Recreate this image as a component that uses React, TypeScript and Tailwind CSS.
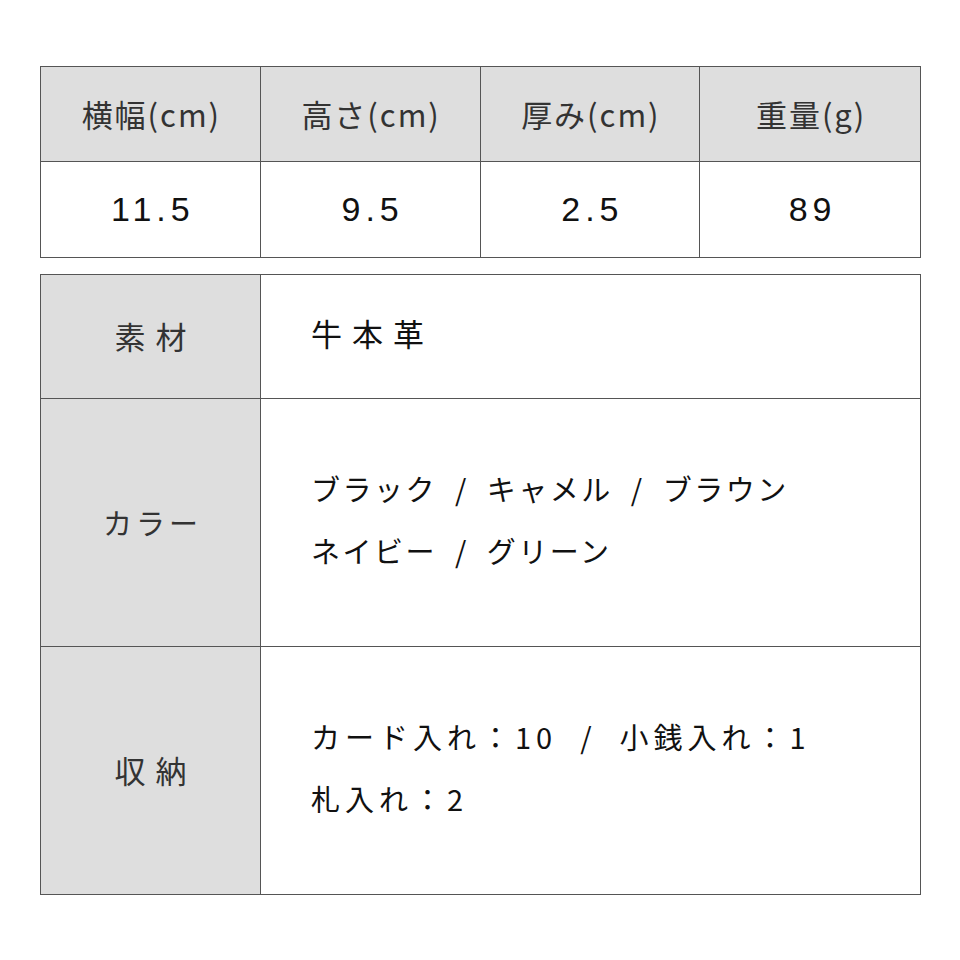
const font = {
  fontFamily: '"Noto Sans CJK JP", "Noto Sans", sans-serif',
};

const SPECS = [
  { label: "横幅(cm)", value: "11.5" },
  { label: "高さ(cm)", value: "9.5" },
  { label: "厚み(cm)", value: "2.5" },
  { label: "重量(g)", value: "89" },
];

const DETAILS = [
  {
    label: "素材",
    labelCls: "text-[31px] tracking-[10px] pl-[10px]",
    lines: ["牛本革"],
    lineCls: "text-[31px] tracking-[10px]",
    h: "h-[124px]",
  },
  {
    label: "カラー",
    labelCls: "text-[29px] tracking-[4px] pl-[4px]",
    lines: ["ブラック / キャメル / ブラウン", "ネイビー / グリーン"],
    lineCls: "text-[29px] tracking-[2.5px]",
    h: "h-[248px]",
  },
  {
    label: "収納",
    labelCls: "text-[31px] tracking-[10px] pl-[10px]",
    lines: ["カード入れ：10 / 小銭入れ：1", "札入れ：2"],
    lineCls: "text-[29px] tracking-[5px]",
    h: "h-[247px]",
  },
];

export default function App() {
  return (
    <div className="w-[960px] h-[960px] bg-white pt-[66px] px-[40px]" style={font}>
      <div className="grid grid-cols-4 border border-[#555] w-[881px]">
        {SPECS.map((s, i) => (
          <div
            key={s.label}
            className={`h-[95px] flex items-center justify-center bg-[#dedede] border-b border-[#555] text-[31px] text-[#333] tracking-[2px] pl-[2px] ${
              i < 3 ? "border-r" : ""
            }`}
          >
            {s.label}
          </div>
        ))}
        {SPECS.map((s, i) => (
          <div
            key={s.value}
            className={`h-[95px] flex items-center justify-center text-[34px] text-[#111] tracking-[5px] pl-[5px] ${
              i < 3 ? "border-r border-[#555]" : ""
            }`}
            style={{ fontFamily: '"Liberation Sans", Arial, sans-serif' }}
          >
            {s.value}
          </div>
        ))}
      </div>

      <div className="mt-[16px] border border-[#555] w-[881px]">
        {DETAILS.map((d, i) => (
          <div
            key={d.label}
            className={`flex ${d.h} ${i < DETAILS.length - 1 ? "border-b border-[#555]" : ""}`}
          >
            <div
              className={`w-[220px] shrink-0 bg-[#dedede] border-r border-[#555] flex items-center justify-center text-[#333] ${d.labelCls}`}
            >
              {d.label}
            </div>
            <div
              className={`flex-1 flex flex-col justify-center pl-[50px] pb-[7px] gap-[16px] text-[#111] leading-[46px] whitespace-pre ${d.lineCls}`}
            >
              {d.lines.map((l) => (
                <div key={l}>{l.replace(/ \/ /g, "  /  ")}</div>
              ))}
            </div>
          </div>
        ))}
      </div>
    </div>
  );
}
